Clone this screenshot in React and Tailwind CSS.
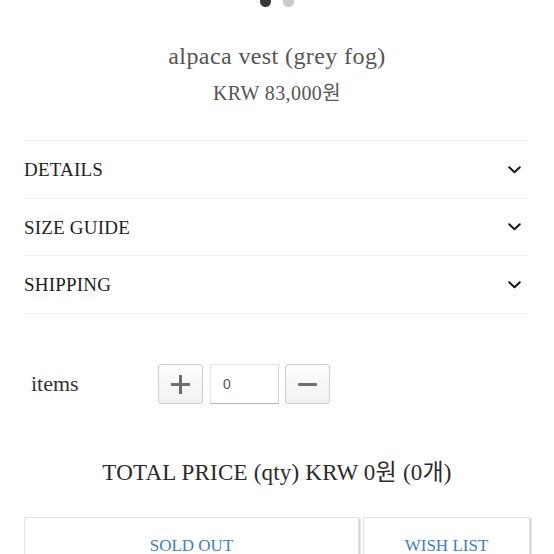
import React from "react";

const serif = { fontFamily: '"Liberation Serif", "Noto Sans CJK KR", serif' };

function Chevron() {
  return (
    <svg width="13" height="8" viewBox="0 0 13 8" fill="none">
      <polyline points="1.2,1.2 6.5,6.3 11.8,1.2" stroke="#111" strokeWidth="1.9" strokeLinecap="round" strokeLinejoin="round" />
    </svg>
  );
}

function Row({ label, h }) {
  return (
    <div className={`flex items-center justify-between border-b border-[#eeeeee] pr-[7px] ${h}`}>
      <span className="text-[19px] leading-none text-[#1e1e1e] tracking-[0.2px]">{label}</span>
      <Chevron />
    </div>
  );
}

export default function App() {
  return (
    <div className="w-[554px] h-[554px] overflow-hidden bg-white" style={serif}>
      <div className="flex h-[7px] items-end justify-center gap-[12px]">
        <span className="block h-[11px] w-[11px] rounded-full bg-[#383838]" />
        <span className="block h-[11px] w-[11px] rounded-full bg-[#c9c9c9]" />
      </div>
      <div className="mt-[34px] text-center text-[24px] leading-[30px] text-[#555555] tracking-[0.4px]">
        alpaca vest (grey fog)
      </div>
      <div className="mt-[10px] text-center text-[20px] leading-[24px] text-[#555555] tracking-[0.4px]">
        KRW 83,000원
      </div>

      <div className="ml-[24px] mr-[26px] mt-[35px] border-t border-[#eeeeee]">
        <Row label="DETAILS" h="h-[58px]" />
        <Row label="SIZE GUIDE" h="h-[57px]" />
        <Row label="SHIPPING" h="h-[58px]" />
      </div>

      <div className="ml-[31px] mt-[50px] flex items-center">
        <span className="w-[127px] text-[22px] leading-none text-[#333333]">items</span>
        <div className="flex h-[40px] w-[45px] items-center justify-center rounded-[3px] border border-[#cfcfcf] bg-gradient-to-b from-[#fdfdfd] to-[#f1f1f1]">
          <svg width="19" height="19" viewBox="0 0 19 19">
            <rect x="0" y="8" width="19" height="3" fill="#6e6e6e" />
            <rect x="8" y="0" width="3" height="19" fill="#6e6e6e" />
          </svg>
        </div>
        <div
          className="ml-[7px] flex h-[40px] w-[69px] items-center border border-[#e3e3e3] border-b-[#b5b5b5] border-r-[#d0d0d0] bg-white pl-[12px] text-[14px] text-[#555555]"
          style={{ fontFamily: '"Liberation Sans", Arial, sans-serif' }}
        >
          0
        </div>
        <div className="ml-[6px] flex h-[40px] w-[45px] items-center justify-center rounded-[3px] border border-[#cfcfcf] bg-gradient-to-b from-[#fdfdfd] to-[#f1f1f1]">
          <svg width="19" height="3" viewBox="0 0 19 3">
            <rect x="0" y="0" width="19" height="3" rx="1" fill="#6e6e6e" />
          </svg>
        </div>
      </div>

      <div className="mt-[54px] text-center text-[23px] leading-[30px] text-[#2a2a2a] tracking-[0.2px]">
        TOTAL PRICE (qty) KRW 0원 (0개)
      </div>

      <div className="ml-[24px] mt-[29px] flex gap-[4px]">
        <div className="flex h-[58px] w-[335px] items-center justify-center border border-[#e2e2e2] shadow-[1px_1px_2px_rgba(0,0,0,0.25)] text-[17px] text-[#3e7fc2]">
          SOLD OUT
        </div>
        <div className="flex h-[58px] w-[167px] items-center justify-center border border-[#e2e2e2] shadow-[1px_1px_2px_rgba(0,0,0,0.25)] text-[17px] text-[#3e7fc2]">
          WISH LIST
        </div>
      </div>
    </div>
  );
}
